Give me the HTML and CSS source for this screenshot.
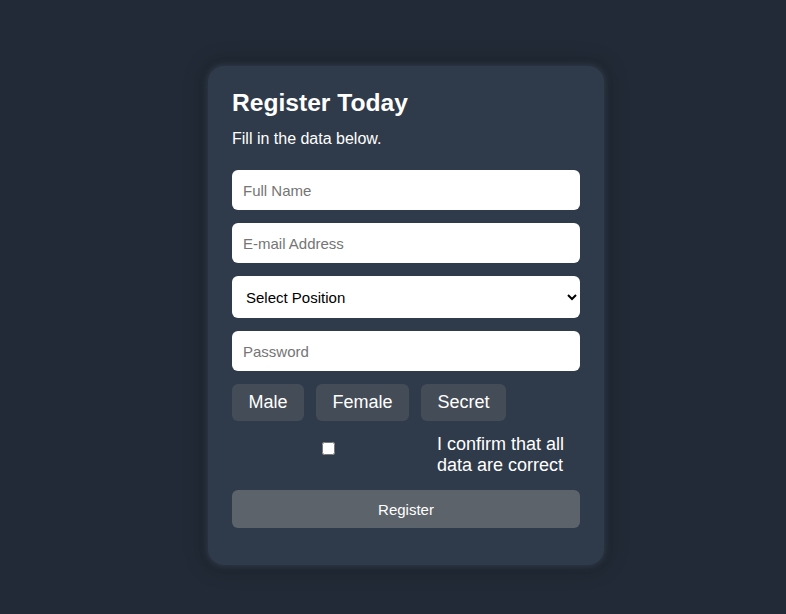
FILE: index.html
```html
<!DOCTYPE html>
<html>
<head>
<meta charset="utf-8">
<link rel="stylesheet" href="styles.css">
</head>
<body>
<div class="page">
  <form class="card">
    <h1 class="title">Register Today</h1>
    <p class="subtitle">Fill in the data below.</p>
    <input class="field" type="text" placeholder="Full Name">
    <input class="field" type="email" placeholder="E-mail Address">
    <select class="field select">
      <option>Select Position</option>
    </select>
    <input class="field" type="password" placeholder="Password">
    <div class="genders">
      <button type="button" class="gender">Male</button>
      <button type="button" class="gender">Female</button>
      <button type="button" class="gender">Secret</button>
    </div>
    <div class="confirm">
      <input class="check" type="checkbox" id="c">
      <label class="confirm-label" for="c">I confirm that all data are correct</label>
    </div>
    <button type="button" class="submit">Register</button>
  </form>
</div>
</body>
</html>
```
FILE: styles.css
```css
* { box-sizing: border-box; }
html, body { margin: 0; height: 100%; }
body {
  background: #212a36;
  font-family: "Liberation Sans", Arial, sans-serif;
  color: #fff;
}
.page {
  display: flex;
  justify-content: center;
  padding: 66px 0 0 26px;
}
.card {
  width: 396px;
  background: #2f3b4a;
  border-radius: 16px;
  padding: 22px 24px 37px;
  display: flex;
  flex-direction: column;
  box-shadow: 0 0 6px 1px rgba(58,70,86,0.7), 0 0 22px 4px rgba(0,0,0,0.18);
}
.title {
  margin: 0;
  font-size: 24.6px;
  font-weight: bold;
  line-height: 30px;
}
.subtitle {
  margin: 10px 0 21px;
  font-size: 16px;
  line-height: 21px;
}
.field {
  height: 40px;
  border: none;
  border-radius: 6px;
  background: #fff;
  font-family: inherit;
  font-size: 15px;
  padding: 0 11px;
  margin-bottom: 13px;
  color: #000;
  outline: none;
}
.field::placeholder { color: #757575; }
.select {
  height: 42px;
  padding: 0 10px;
}
.genders {
  display: flex;
  gap: 12px;
  margin-bottom: 12px;
}
.gender {
  height: 37px;
  border: none;
  border-radius: 6px;
  background: #444c57;
  color: #fff;
  font-family: inherit;
  font-size: 18px;
  padding: 0 16.5px;
}
.confirm {
  display: flex;
  align-items: flex-start;
  margin-bottom: 14px;
}
.check {
  margin: 9px 0 0 90px;
  width: 13px;
  height: 13px;
}
.confirm-label {
  margin: 1px 0 0 auto;
  width: 143px;
  font-size: 18px;
  line-height: 21px;
}
.submit {
  height: 38px;
  border: none;
  border-radius: 6px;
  background: #5c636a;
  color: #fff;
  font-family: inherit;
  font-size: 15px;
}
```
